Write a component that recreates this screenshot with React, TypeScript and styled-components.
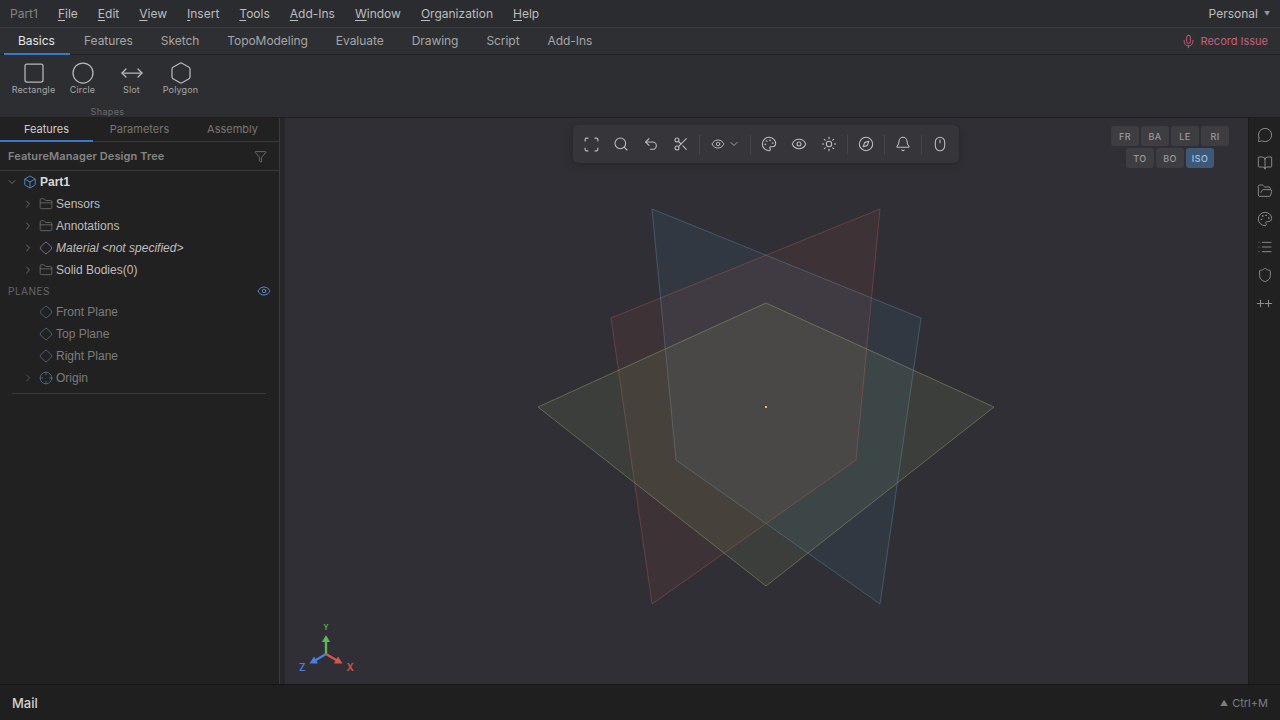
import React from 'react';
import styled, { createGlobalStyle } from 'styled-components';
import {
  Square, Circle, MoveHorizontal, Hexagon, Mic, Funnel, ChevronDown, ChevronRight, Box, FolderClosed, Diamond,
  Eye, Crosshair, Scan, Search, Undo2, Scissors, Palette, Sun, Compass, Bell, Mouse, MessageCircle,
  BookOpen, FolderOpen, List, Shield, Plus,
} from 'lucide-react';

const Global = createGlobalStyle`
  html, body { margin: 0; padding: 0; height: 100%; background: #212121; overflow: hidden; }
  #root { height: 100%; }
  * { box-sizing: border-box; }
`;

const Page = styled.div`
  width: 1280px; height: 720px; display: flex; flex-direction: column;
  font-family: Inter, "Liberation Sans", sans-serif; color: #ccc; overflow: hidden;
`;
const MenuBar = styled.div`
  height: 28px; flex: none; display: flex; align-items: center; padding: 0 10px 1px 10px;
  background: #2b2c30; border-bottom: 1px solid #3a3b3f; font-size: 12px;
`;
const AppName = styled.span`color: #838383; margin-right: 20px;`;
const MenuItem = styled.span`
  color: #bdbdbd; margin-right: 20px; display: inline-block;
  &::first-letter { text-decoration: underline; text-underline-offset: 2px; }
`;
const Account = styled.span`margin-left: auto; color: #bdbdbd; display: flex; align-items: center; gap: 6px;`;
const Caret = styled.span`font-size: 6px; color: #999;`;

const TabBar = styled.div`
  height: 27px; flex: none; display: flex; align-items: stretch; padding: 0 12px 0 4px;
  background: #2e2f33; border-bottom: 1px solid #202124; font-size: 12px; letter-spacing: -.05px;
`;
const RibbonTab = styled.div<{ $active?: boolean }>`
  padding: 0 ${p => (p.$active ? 15.3 : 14)}px 0 14px; display: flex; align-items: center; margin-bottom: -1px;
  color: ${p => (p.$active ? '#e6e6e6' : '#a6a6a6')};
  border-bottom: 2px solid ${p => (p.$active ? '#3b78c9' : 'transparent')};
`;
const Record = styled.div`
  margin-left: auto; display: flex; align-items: center; gap: 5px; color: #c4607f; font-size: 11px; letter-spacing: 0;
`;

const Ribbon = styled.div`
  height: 63px; flex: none; background: #2d2e32; border-bottom: 1px solid #1e1f21;
  padding: 6px 0 0 9px; position: relative;
`;
const ToolRow = styled.div`display: flex;`;
const Tool = styled.div`
  width: 49px; display: flex; flex-direction: column; align-items: center;
  font-size: 9px; letter-spacing: .15px; color: #a6a6a6; white-space: nowrap;
  svg { color: #b8b8b8; margin-bottom: -1px; }
`;
const GroupLabel = styled.div`
  position: absolute; left: 0; width: 215px; bottom: 0; text-align: center;
  font-size: 9px; line-height: 11px; letter-spacing: .35px; color: #6a6a6a;
`;

const Main = styled.div`flex: 1; min-height: 0; display: flex;`;
const Side = styled.div`
  width: 280px; flex: none; background: #212121; border-right: 1px solid #3a3a3a; display: flex; flex-direction: column;
`;
const SideTabs = styled.div`
  height: 24px; flex: none; display: grid; grid-template-columns: repeat(3, 1fr);
  border-bottom: 1px solid #38383a; font-size: 11px;
`;
const SideTab = styled.div<{ $active?: boolean }>`
  display: flex; align-items: center; justify-content: center; margin-bottom: -1px;
  color: ${p => (p.$active ? '#cfcfcf' : '#777')};
  border-bottom: 2px solid ${p => (p.$active ? '#3b78c9' : 'transparent')};
`;
const TreeHeader = styled.div`
  height: 29px; flex: none; display: flex; align-items: center; justify-content: space-between;
  padding: 0 12px 0 8px; border-bottom: 1px solid #38383a; font-size: 11px; font-weight: 600;
  letter-spacing: .1px; color: #858585; svg { color: #8c8c8c; }
`;
const Tree = styled.div``;
const Row = styled.div<{ $dim?: boolean; $strong?: boolean; $italic?: boolean; $indent?: number }>`
  height: 22px; display: flex; align-items: center; padding-left: ${p => p.$indent ?? 22}px;
  font-family: "Liberation Sans", Arial, sans-serif; font-size: 12px; white-space: nowrap;
  color: ${p => (p.$dim ? '#7c7c7c' : p.$strong ? '#d8d8d8' : '#bdbdbd')};
  font-weight: ${p => (p.$strong ? 700 : 400)};
  font-style: ${p => (p.$italic ? 'italic' : 'normal')};
`;
const Chevron = styled.span<{ $faint?: boolean }>`
  width: 12px; display: flex; justify-content: center; margin-right: 5px;
  color: ${p => (p.$faint ? '#555' : '#6c6c6c')};
`;
const RowIcon = styled.span<{ $color: string }>`
  width: 14px; height: 14px; display: flex; align-items: center; justify-content: center; margin-right: 3px;
  color: ${p => p.$color};
`;
const SectionRow = styled.div`
  height: 20px; display: flex; align-items: center; justify-content: space-between; padding: 0 8px;
  font-size: 10px; letter-spacing: .5px; color: #666; svg { color: #5f94d8; }
`;
const Divider = styled.div`height: 1px; margin: 4px 13px 0 12px; background: #38383a;`;

const Splitter = styled.div`width: 5px; flex: none; background: #262627;`;

const Viewport = styled.div`flex: 1; position: relative; background: #2f2f35; overflow: hidden;`;
const Scene = styled.svg`position: absolute; left: 0; top: 0; width: 100%; height: 100%;`;
const FloatBar = styled.div`
  position: absolute; left: 288px; top: 7px; width: 386px; height: 38px; padding: 0 3px;
  display: flex; align-items: center; background: #36363a; border-radius: 6px;
  box-shadow: 0 2px 8px rgba(0,0,0,.22); color: #bdbdbd;
`;
const FloatBtn = styled.span<{ $w?: number }>`
  width: ${p => p.$w ?? 30}px; flex: none; display: flex; align-items: center; justify-content: center; gap: 3px;
`;
const FloatSep = styled.span`width: 1px; height: 19px; background: #47474b; flex: none; margin: 0 3px;`;

const Views = styled.div`
  position: absolute; left: 826px; top: 8px; width: 118px; display: flex; flex-wrap: wrap;
  justify-content: center; gap: 2px;
`;
const ViewBtn = styled.div<{ $active?: boolean }>`
  width: 28px; height: 20px; border-radius: 3px; display: flex; align-items: center; justify-content: center;
  font-size: 9px; font-weight: 500; letter-spacing: .4px;
  background: ${p => (p.$active ? '#3f5878' : '#3d3d42')};
  color: ${p => (p.$active ? '#9cc2f2' : '#9a9a9a')};
`;
const AxisLabel = styled.text<{ $c: string; $size: number }>`
  font-family: Inter, sans-serif; font-size: ${p => p.$size}px; font-weight: 600; fill: ${p => p.$c};
`;
const RightRail = styled.div`
  width: 32px; flex: none; background: #212121; border-left: 1px solid #1a1a1a; display: flex; flex-direction: column;
  align-items: center; padding-top: 9px; gap: 12px; color: #8f8f8f;
`;
const RailPlus = styled.span`
  height: 16px; display: flex; align-items: center; svg + svg { margin-left: -3px; }
`;
const Footer = styled.div`
  height: 36px; flex: none; background: #1f1f1f; border-top: 1px solid #161616; display: flex; align-items: center;
  justify-content: space-between; padding: 0 12px;
`;
const MailLabel = styled.span`font-size: 13px; font-weight: 500; color: #d2d2d2;`;
const Shortcut = styled.span`font-size: 11px; color: #7e7e7e; display: flex; align-items: center; gap: 4px;`;
const ShortcutMark = styled.span`font-size: 8px;`;

const menus = ['File', 'Edit', 'View', 'Insert', 'Tools', 'Add-Ins', 'Window', 'Organization', 'Help'];
const tabs = ['Basics', 'Features', 'Sketch', 'TopoModeling', 'Evaluate', 'Drawing', 'Script', 'Add-Ins'];
const tools = [
  { label: 'Rectangle', Icon: Square },
  { label: 'Circle', Icon: Circle },
  { label: 'Slot', Icon: MoveHorizontal },
  { label: 'Polygon', Icon: Hexagon },
];
const offset = (pts: string) =>
  pts.split(' ').map(p => { const [x, y] = p.split(','); return `${+x - 285},${+y - 118}`; }).join(' ');

export default function App() {
  return (
    <Page>
      <Global />
      <MenuBar>
        <AppName>Part1</AppName>
        {menus.map(m => <MenuItem key={m}>{m}</MenuItem>)}
        <Account>Personal <Caret>▼</Caret></Account>
      </MenuBar>
      <TabBar>
        {tabs.map((t, i) => <RibbonTab key={t} $active={i === 0}>{t}</RibbonTab>)}
        <Record><Mic size={15} strokeWidth={1.5} />Record Issue</Record>
      </TabBar>
      <Ribbon>
        <ToolRow>
          {tools.map(({ label, Icon }) => (
            <Tool key={label}><Icon size={24} strokeWidth={1.25} />{label}</Tool>
          ))}
        </ToolRow>
        <GroupLabel>Shapes</GroupLabel>
      </Ribbon>
      <Main>
        <Side>
          <SideTabs>
            <SideTab $active>Features</SideTab>
            <SideTab>Parameters</SideTab>
            <SideTab>Assembly</SideTab>
          </SideTabs>
          <TreeHeader>FeatureManager Design Tree<Funnel size={13} strokeWidth={1.25} /></TreeHeader>
          <Tree>
            <Row $strong $indent={6}>
              <Chevron><ChevronDown size={12} /></Chevron>
              <RowIcon $color="#5c9ae0"><Box size={14} strokeWidth={1.4} /></RowIcon>Part1
            </Row>
            {['Sensors', 'Annotations'].map(n => (
              <Row key={n}>
                <Chevron><ChevronRight size={12} /></Chevron>
                <RowIcon $color="#7d7d7d"><FolderClosed size={14} strokeWidth={1.2} /></RowIcon>{n}
              </Row>
            ))}
            <Row $italic>
              <Chevron><ChevronRight size={12} /></Chevron>
              <RowIcon $color="#9a7fd0"><Diamond size={14} strokeWidth={1.3} /></RowIcon>Material &lt;not specified&gt;
            </Row>
            <Row>
              <Chevron><ChevronRight size={12} /></Chevron>
              <RowIcon $color="#7d7d7d"><FolderClosed size={14} strokeWidth={1.2} /></RowIcon>Solid Bodies(0)
            </Row>
            <SectionRow>PLANES<Eye size={14} strokeWidth={1.5} /></SectionRow>
            {['Front Plane', 'Top Plane', 'Right Plane'].map(n => (
              <Row key={n} $dim $indent={39}>
                <RowIcon $color="#5a7397"><Diamond size={14} strokeWidth={1.3} /></RowIcon>{n}
              </Row>
            ))}
            <Row $dim>
              <Chevron $faint><ChevronRight size={12} /></Chevron>
              <RowIcon $color="#5a7397"><Crosshair size={14} strokeWidth={1.3} /></RowIcon>Origin
            </Row>
          </Tree>
          <Divider />
        </Side>
        <Splitter />
        <Viewport>
          <Scene viewBox="0 0 963 566">
            <polygon points={offset('652,209 921,318 880,604 676,460')} fill="#4f87b0" fillOpacity=".11" stroke="#5e8db0" strokeOpacity=".42" />
            <polygon points={offset('880,209 611,318 652,604 856,460')} fill="#b85a48" fillOpacity=".11" stroke="#b05555" strokeOpacity=".42" />
            <polygon points={offset('766,303 994,407 766,586 538,407')} fill="#98b060" fillOpacity=".12" stroke="#8aa46a" strokeOpacity=".5" />
            <rect x="480" y="288" width="2" height="2" fill="#e8c14a" />
            <line x1="41" y1="536" x2="41" y2="522" stroke="#62b858" strokeWidth="2.4" />
            <polygon points="41,517 37,524 45,524" fill="#62b858" />
            <line x1="41" y1="536" x2="52" y2="542.5" stroke="#d9534f" strokeWidth="2.4" />
            <polygon points="57.5,545.5 49,545.5 53,538.5" fill="#d9534f" />
            <line x1="41" y1="536" x2="30" y2="542.5" stroke="#4a7fe0" strokeWidth="2.4" />
            <polygon points="24.5,545.5 33,545.5 29,538.5" fill="#4a7fe0" />
            <AxisLabel $c="#62b858" $size={7} x="38.5" y="512">Y</AxisLabel>
            <AxisLabel $c="#d9534f" $size={10} x="61.5" y="553">X</AxisLabel>
            <AxisLabel $c="#4a7fe0" $size={10} x="14" y="553">Z</AxisLabel>
          </Scene>
          <FloatBar>
            <FloatBtn><Scan size={17} strokeWidth={1.6} /></FloatBtn>
            <FloatBtn><Search size={16} strokeWidth={1.6} /></FloatBtn>
            <FloatBtn><Undo2 size={16} strokeWidth={1.6} /></FloatBtn>
            <FloatBtn><Scissors size={16} strokeWidth={1.6} /></FloatBtn>
            <FloatSep />
            <FloatBtn $w={44}><Eye size={14} strokeWidth={1.6} /><ChevronDown size={12} strokeWidth={1.6} /></FloatBtn>
            <FloatSep />
            <FloatBtn><Palette size={16} strokeWidth={1.6} /></FloatBtn>
            <FloatBtn><Eye size={16} strokeWidth={1.6} /></FloatBtn>
            <FloatBtn><Sun size={16} strokeWidth={1.6} /></FloatBtn>
            <FloatSep />
            <FloatBtn><Compass size={16} strokeWidth={1.6} /></FloatBtn>
            <FloatSep />
            <FloatBtn><Bell size={16} strokeWidth={1.6} /></FloatBtn>
            <FloatSep />
            <FloatBtn><Mouse size={16} strokeWidth={1.6} /></FloatBtn>
          </FloatBar>
          <Views>
            {['FR', 'BA', 'LE', 'RI', 'TO', 'BO', 'ISO'].map(v => <ViewBtn key={v} $active={v === 'ISO'}>{v}</ViewBtn>)}
          </Views>
        </Viewport>
        <RightRail>
          <MessageCircle size={16} strokeWidth={1.4} />
          <BookOpen size={16} strokeWidth={1.4} />
          <FolderOpen size={16} strokeWidth={1.4} />
          <Palette size={16} strokeWidth={1.4} />
          <List size={16} strokeWidth={1.4} />
          <Shield size={16} strokeWidth={1.4} />
          <RailPlus><Plus size={11} strokeWidth={2.2} /><Plus size={11} strokeWidth={2.2} /></RailPlus>
        </RightRail>
      </Main>
      <Footer>
        <MailLabel>Mail</MailLabel>
        <Shortcut><ShortcutMark>▲</ShortcutMark>Ctrl+M</Shortcut>
      </Footer>
    </Page>
  );
}
